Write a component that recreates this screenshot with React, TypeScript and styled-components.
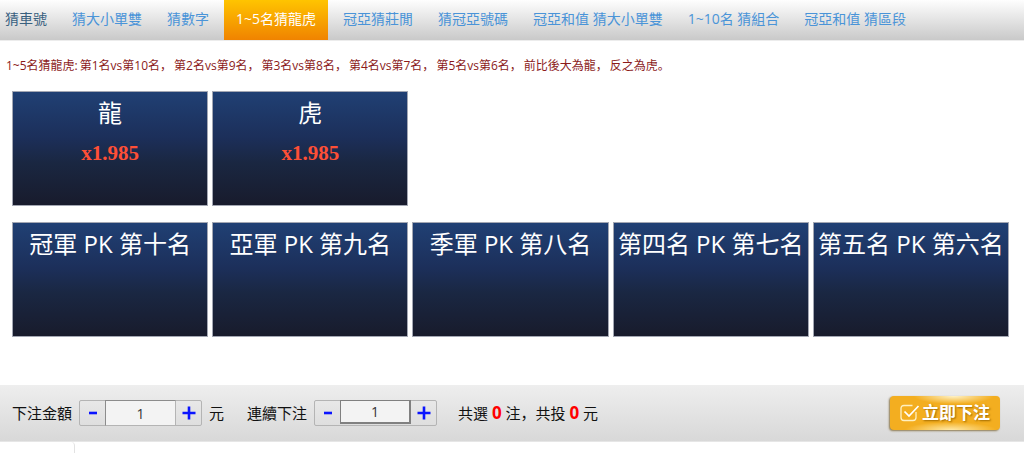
import React, { useState } from "react";
import styled, { createGlobalStyle } from "styled-components";

const GlobalStyle = createGlobalStyle`
  * { box-sizing: border-box; }
  body {
    margin: 0;
    background: #fff;
    color: #111;
    font-family: "Open Sans", "Noto Sans CJK SC", sans-serif;
    font-size: 15px;
  }
  button, input { font-family: inherit; margin: 0; }
`;

const TabBar = styled.nav`
  display: flex;
  gap: 5px;
  height: 40px;
  overflow: hidden;
  background: linear-gradient(#fefefe, #c9c9c9);
  box-shadow: 0 1px 0 #ececec;
`;

const Tab = styled.a<{ $state?: "active" | "visited" }>`
  flex: none;
  padding: 0 ${(p) => (p.$state === "active" ? 12 : 10)}px;
  font-size: 14px;
  line-height: 38px;
  white-space: nowrap;
  text-decoration: none;
  color: ${(p) =>
    p.$state === "active" ? "#fff" : p.$state === "visited" ? "#39617f" : "#4a94d8"};
  background: ${(p) =>
    p.$state === "active" ? "linear-gradient(#ffc400, #f08300)" : "none"};

  &:first-child { padding-left: 5px; }
`;

const Rules = styled.p`
  margin: 0;
  padding: 15px 6px 0;
  font-size: 12px;
  line-height: 22px;
  color: #8b1a1a;
`;

const Clause = styled.span`
  margin-right: 2px;
`;

const Board = styled.main`
  display: grid;
  grid-template-columns: repeat(5, 1fr);
  gap: 16px 4px;
  padding: 14px 15px 48px 12px;
`;

const Card = styled.button<{ $startsRow?: boolean }>`
  display: flex;
  flex-direction: column;
  align-items: center;
  height: 115px;
  padding: 4px 0;
  border: 1px solid #a3a7b3;
  background: linear-gradient(#204074, #1c2f5a 40%, #1a2742 62%, #181b2c);
  color: #fff;
  white-space: nowrap;
  ${(p) => p.$startsRow && "grid-column-start: 1;"}
`;

const CardName = styled.span`
  font-size: 24px;
  line-height: 34px;
`;

const Odds = styled.strong`
  margin-top: 11px;
  font-family: "Liberation Serif", serif;
  font-size: 21px;
  line-height: 24px;
  color: #ff4f36;
`;

const BetBar = styled.form`
  display: flex;
  align-items: center;
  height: 57px;
  padding: 0 24px 0 12px;
  border-bottom: 1px solid #e6e6e6;
  background: linear-gradient(#eee, #d8d8d8);
  line-height: 24px;
  white-space: nowrap;
`;

const Field = styled.div`
  display: flex;
  align-items: center;
  gap: 7px;
  margin-right: 23px;
`;

const Stepper = styled.div`
  display: flex;
  width: 123px;
  height: 26px;
  border: 1px solid #b4b4b4;
  border-radius: 2px;
`;

const StepButton = styled.button`
  width: 25px;
  padding: 0;
  border: 0;
  background: transparent;
  color: #0a14ff;
  display: grid;
  place-items: center;
`;

const Amount = styled.input<{ $raised?: boolean }>`
  flex: 1;
  min-width: 0;
  height: ${(p) => (p.$raised ? 24 : 26)}px;
  margin-top: -1px;
  padding: 0;
  border: 1px solid #8c8c8c;
  border-width: ${(p) => (p.$raised ? "1px 2px 2px 1px" : "1px")};
  border-color: ${(p) => (p.$raised ? "#808080" : "#8c8c8c #b4b4b4 #b4b4b4 #8c8c8c")};
  border-radius: 0;
  background: #f3f3f3;
  color: #333;
  font-size: 14px;
  text-align: center;
  outline: none;
`;

const Summary = styled.output`
  margin-left: -2px;
`;

const Count = styled.strong`
  color: #f00;
  font-size: 17px;
`;

const Submit = styled.button`
  display: flex;
  align-items: center;
  gap: 2px;
  width: 110px;
  height: 34px;
  margin-left: auto;
  padding: 0 8px 0 9px;
  border: 0;
  border-radius: 4px;
  background:
    radial-gradient(ellipse 40px 8px at 58% 0, #fff3c8, transparent),
    radial-gradient(ellipse 46px 8px at 55% 100%, #ffe9a8, transparent),
    #f3ae20;
  box-shadow: -1px 1px 2px #8d7a50;
  color: #fff;
  font-size: 17px;
  font-weight: 700;
  line-height: 34px;
  text-shadow: 1px 1px 2px #a06a00;
`;

const Panel = styled.div`
  width: 75px;
  height: 11px;
  border: 1px solid #e2e2e2;
  border-width: 0 1px 0 0;
  border-top-right-radius: 4px;
`;

const tabs: { label: string; state?: "active" | "visited" }[] = [
  { label: "猜車號", state: "visited" },
  { label: "猜大小單雙" },
  { label: "猜數字" },
  { label: "1~5名猜龍虎", state: "active" },
  { label: "冠亞猜莊閒" },
  { label: "猜冠亞號碼" },
  { label: "冠亞和值 猜大小單雙" },
  { label: "1~10名 猜組合" },
  { label: "冠亞和值 猜區段" },
];

const clauses = [
  "1~5名猜龍虎:",
  "第1名vs第10名，",
  "第2名vs第9名，",
  "第3名vs第8名，",
  "第4名vs第7名，",
  "第5名vs第6名，",
  "前比後大為龍，",
  "反之為虎。",
];

const sides = ["龍", "虎"];

const matchups = [
  "冠軍 PK 第十名",
  "亞軍 PK 第九名",
  "季軍 PK 第八名",
  "第四名 PK 第七名",
  "第五名 PK 第六名",
];

function NumberField(props: { id: string; label: string; unit?: string; raised?: boolean }) {
  const [value, setValue] = useState(1);
  return (
    <Field>
      <label htmlFor={props.id}>{props.label}</label>
      <Stepper>
        <StepButton type="button" aria-label="-" onClick={() => setValue(Math.max(1, value - 1))}>
          <svg width="14" height="14" viewBox="0 0 14 14">
            <path d="M3 7h8" stroke="currentColor" strokeWidth="2.600" />
          </svg>
        </StepButton>
        <Amount
          id={props.id}
          $raised={props.raised}
          value={value}
          onChange={(e) => setValue(Number(e.target.value) || 1)}
        />
        <StepButton type="button" aria-label="+" onClick={() => setValue(value + 1)}>
          <svg width="14" height="14" viewBox="0 0 14 14">
            <path d="M0.500 7h13M7 0.500v13" stroke="currentColor" strokeWidth="2.600" />
          </svg>
        </StepButton>
      </Stepper>
      {props.unit && <span>{props.unit}</span>}
    </Field>
  );
}

export default function App() {
  return (
    <>
      <GlobalStyle />
      <TabBar>
        {tabs.map((t) => (
          <Tab key={t.label} href="#" $state={t.state}>
            {t.label}
          </Tab>
        ))}
      </TabBar>
      <Rules>
        {clauses.map((c) => (
          <Clause key={c}>{c}</Clause>
        ))}
      </Rules>
      <Board>
        {sides.map((s) => (
          <Card key={s} type="button">
            <CardName>{s}</CardName>
            <Odds>x1.985</Odds>
          </Card>
        ))}
        {matchups.map((m, i) => (
          <Card key={m} type="button" $startsRow={i === 0}>
            <CardName>{m}</CardName>
          </Card>
        ))}
      </Board>
      <BetBar onSubmit={(e) => e.preventDefault()}>
        <NumberField id="amount" label="下注金額" unit="元" />
        <NumberField id="repeat" label="連續下注" raised />
        <Summary>
          共選 <Count>0</Count> 注，共投 <Count>0</Count> 元
        </Summary>
        <Submit type="submit">
          <svg width="21" height="20" viewBox="0 0 21 20" fill="none">
            <path
              d="M13.500 2.500H5Q2 2.500 2 5.500V14.500Q2 17.500 5 17.500H14Q17 17.500 17 14.500V9"
              stroke="#fff0c0"
              strokeWidth="1.300"
            />
            <path d="M5.500 8.500L10 13L19.500 3" stroke="#fff" strokeWidth="1.700" />
          </svg>
          立即下注
        </Submit>
      </BetBar>
      <Panel />
    </>
  );
}
